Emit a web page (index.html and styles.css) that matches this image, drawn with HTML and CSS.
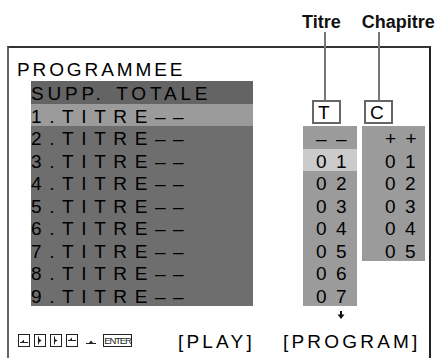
FILE: index.html
```html
<!DOCTYPE html>
<html>
<head>
<meta charset="utf-8">
<link rel="stylesheet" href="styles.css">
</head>
<body>
<div class="stage">
  <div class="labels">
    <span class="lbl lbl-t">Titre</span>
    <span class="lbl lbl-c">Chapitre</span>
  </div>
  <div class="leader leader-t"></div>
  <div class="leader leader-c"></div>
  <div class="frame">
    <div class="title">PROGRAMMEE</div>
    <div class="main">
      <div class="list">
        <div class="row head">SUPP. TOTALE</div>
        <div class="row sel">1.TITRE––</div>
        <div class="row">2.TITRE––</div>
        <div class="row">3.TITRE––</div>
        <div class="row">4.TITRE––</div>
        <div class="row">5.TITRE––</div>
        <div class="row">6.TITRE––</div>
        <div class="row">7.TITRE––</div>
        <div class="row">8.TITRE––</div>
        <div class="row">9.TITRE––</div>
      </div>
      <div class="col col-t">
        <div class="box">T</div>
        <div class="cells">
          <div class="cell">––</div>
          <div class="cell hl">01</div>
          <div class="cell">02</div>
          <div class="cell">03</div>
          <div class="cell">04</div>
          <div class="cell">05</div>
          <div class="cell">06</div>
          <div class="cell">07</div>
        </div>
        <svg class="down" viewBox="0 0 8 8" width="8" height="8"><path d="M3 0H5V3.5H7.5L4 8L0.5 3.5H3Z" fill="#111"/></svg>
      </div>
      <div class="col col-c">
        <div class="box">C</div>
        <div class="cells">
          <div class="cell">++</div>
          <div class="cell">01</div>
          <div class="cell">02</div>
          <div class="cell">03</div>
          <div class="cell">04</div>
          <div class="cell">05</div>
        </div>
      </div>
    </div>
    <div class="footer">
      <div class="keys">
        <svg class="key" viewBox="0 0 12 13" width="12" height="13"><rect x="0.5" y="0.5" width="11" height="12" fill="#fff" stroke="#222"/><path d="M2 8.5H10" stroke="#222"/><path d="M3 8.5L6 5.5V8.5Z" fill="#222"/></svg>
        <svg class="key" viewBox="0 0 12 13" width="12" height="13"><rect x="0.5" y="0.5" width="11" height="12" fill="#fff" stroke="#222"/><path d="M4.5 2.5V10.5" stroke="#222"/><path d="M4.5 4L7.5 6.5L4.5 9Z" fill="#222"/></svg>
        <svg class="key" viewBox="0 0 12 13" width="12" height="13"><rect x="0.5" y="0.5" width="11" height="12" fill="#fff" stroke="#222"/><path d="M4.5 2.5V10.5" stroke="#222"/><path d="M5 5L7.5 6.5L5 8Z" fill="#222"/></svg>
        <svg class="key" viewBox="0 0 12 13" width="12" height="13"><rect x="0.5" y="0.5" width="11" height="12" fill="#fff" stroke="#222"/><path d="M2 6.5H10" stroke="#222"/><path d="M3 6.5L6 3.5V6.5Z" fill="#222"/></svg>
        <svg class="arrow" viewBox="0 0 10 6" width="10" height="6"><path d="M0 5.5H10" stroke="#222"/><path d="M2.5 5.5L5 2.5L7.5 5.5Z" fill="#222"/></svg>
        <span class="enter">ENTER</span>
      </div>
      <div class="cmd">[PLAY]</div>
      <div class="cmd">[PROGRAM]</div>
    </div>
  </div>
</div>
</body>
</html>
```
FILE: styles.css
```css
html, body {
  margin: 0;
  padding: 0;
  background: #fff;
}
body {
  width: 448px;
  height: 358px;
  overflow: hidden;
  font-family: "Liberation Sans", Arial, sans-serif;
  color: #000;
}
.stage {
  position: relative;
  width: 448px;
  height: 358px;
}
.labels {
  height: 46px;
  box-sizing: border-box;
  padding-top: 12px;
  padding-left: 302px;
  display: flex;
  align-items: flex-start;
}
.lbl {
  font-weight: bold;
  font-size: 18px;
  line-height: 20px;
  color: #111;
}
.lbl-c {
  margin-left: 21px;
}
.leader {
  position: absolute;
  top: 32px;
  width: 2px;
  height: 68px;
  background: #777;
}
.leader-t { left: 324px; }
.leader-c { left: 378px; }
.frame {
  margin-left: 7px;
  width: 420px;
  height: 299.5px;
  overflow: hidden;
  border-top: 2px solid #333;
  border-left: 2px solid #666;
  border-right: 2px solid #222;
  padding-top: 10.5px;
  font-size: 19px;
}
.title {
  height: 22.5px;
  line-height: 22.5px;
  padding-left: 8px;
  letter-spacing: 2.9px;
}
.main {
  display: flex;
  align-items: flex-start;
}
.list {
  margin-left: 22px;
  width: 222px;
  background: #6e6e6e;
}
.row {
  height: 22.5px;
  line-height: 26px;
  letter-spacing: 7.6px;
  white-space: nowrap;
}
.row.head {
  background: #646464;
  letter-spacing: 3.8px;
  word-spacing: 3px;
}
.row.sel {
  background: #9b9b9b;
}
.col {
  display: flex;
  flex-direction: column;
}
.col-t {
  margin-left: 50px;
  width: 54px;
}
.col-c {
  margin-left: 5px;
  width: 63px;
}
.box {
  margin-top: 19px;
  margin-bottom: 2px;
  width: 29px;
  height: 24px;
  box-sizing: border-box;
  border: 2px solid #666;
  background: #fff;
  line-height: 21px;
  padding-left: 4px;
}
.col-t .box { margin-left: 9px; }
.col-c .box { margin-left: 2px; }
.cells {
  background: #9b9b9b;
}
.cell {
  height: 22.5px;
  line-height: 26px;
  letter-spacing: 9.4px;
  white-space: nowrap;
}
.col-t .cell { padding-left: 13px; }
.col-c .cell { padding-left: 23px; }
.cell.hl {
  background: #cbcbcb;
}
.down {
  display: block;
  margin-top: 5px;
  margin-left: 34px;
}
.footer {
  display: grid;
  grid-template-columns: 160px 105px 1fr;
  align-items: start;
  padding-left: 9px;
}
.keys {
  margin-top: 15px;
  display: flex;
  align-items: center;
  height: 13px;
}
.key {
  display: block;
  margin-right: 4px;
}
.arrow {
  display: block;
  margin-left: 4px;
  margin-right: 7px;
}
.enter {
  display: block;
  box-sizing: border-box;
  width: 29px;
  height: 13px;
  border: 1px solid #222;
  font-size: 9.5px;
  line-height: 11px;
  letter-spacing: -1.1px;
  text-align: center;
  color: #222;
  white-space: nowrap;
  overflow: hidden;
}
.cmd {
  margin-top: 12px;
  line-height: 22.5px;
  letter-spacing: 3.2px;
  white-space: nowrap;
}
```
